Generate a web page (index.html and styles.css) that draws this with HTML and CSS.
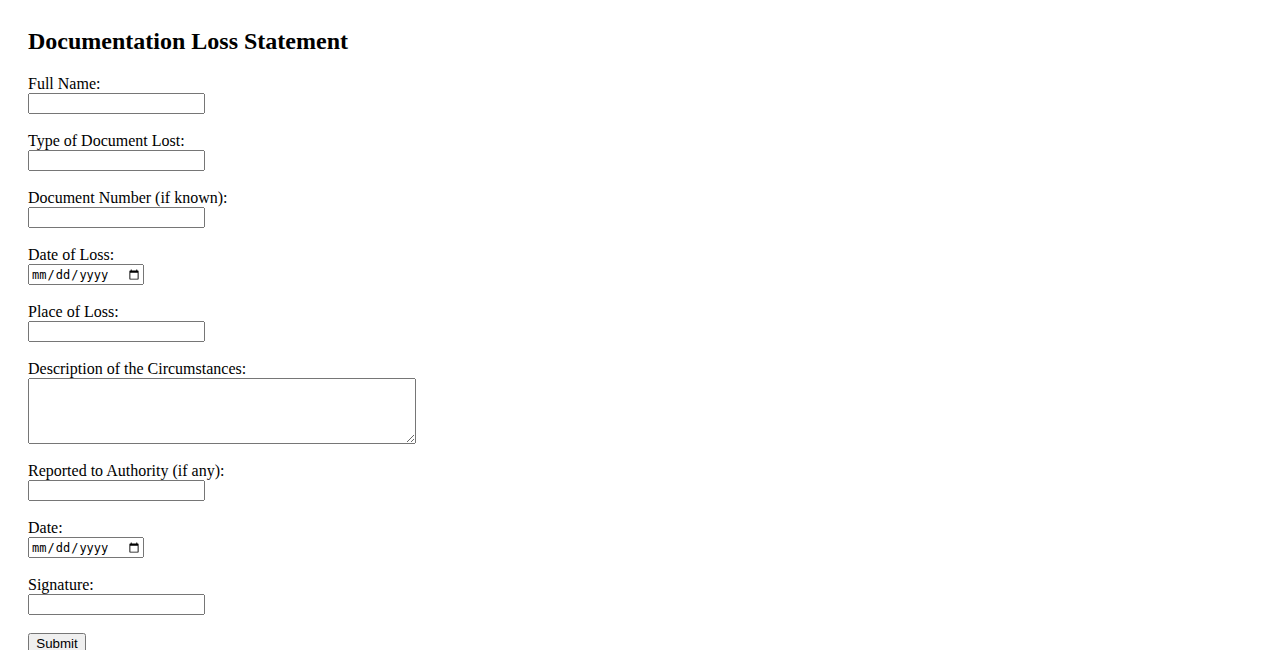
FILE: index.html
```html
<!DOCTYPE html>
<html lang="en">
<head>
    <meta charset="UTF-8">
    <meta name="viewport" content="width=device-width, initial-scale=1.0">
    <title>Documentation Loss Statement</title>
    <link rel="stylesheet" href="styles.css">
</head>
<body>
    <h2>Documentation Loss Statement</h2>
    <form id="loss-form">
        <div class="form-element">
            <label for="fullName">Full Name:</label>
            <input id="fullName" type="text" name="fullName">
        </div>
        <div class="form-element">
            <label for="docType">Type of Document Lost:</label>
            <input id="docType" type="text" name="docType">
        </div>
        <div class="form-element">
            <label for="docNumber">Document Number (if known):</label>
            <input id="docNumber" type="text" name="docNumber">
        </div>
        <div class="form-element">
            <label for="lossDate">Date of Loss:</label>
            <input id="lossDate" type="date" name="lossDate">
        </div>
        <div class="form-element">
            <label for="lossPlace">Place of Loss:</label>
            <input id="lossPlace" type="text" name="lossPlace">
        </div>
        <div class="form-element">
            <label for="description">Description of the Circumstances:</label>
            <textarea id="description" name="description"></textarea>
        </div>
        <div class="form-element">
            <label for="authority">Reported to Authority (if any):</label>
            <input id="authority" type="text" name="authority">
        </div>
        <div class="form-element">
            <label for="date">Date:</label>
            <input id="date" type="date" name="date">
        </div>
        <div class="form-element">
            <label for="signature">Signature:</label>
            <input id="signature" type="text" name="signature">
        </div>
        <input class="submit-button" type="submit" value="Submit">
    </form>
</body>
</html>
```

FILE: styles.css
```css
body {
    margin: 8px;
    padding: 20px;
    font-family: "Liberation Serif", "Times New Roman", serif;
    font-size: 16px;
}

h2 {
    margin-top: 0;
    margin-bottom: 20px;
    font-size: 24px;
}

label {
    display: block;
}

.form-element {
    margin-bottom: 18px;
}

.form-element input,
.form-element textarea {
    display: block;
    box-sizing: border-box;
}

input[type="text"] {
    width: 177px;
    height: 21px;
}

input[type="date"] {
    width: 116px;
    height: 21px;
    font-size: 12px;
}

textarea {
    width: 388px;
    height: 66px;
}

.submit-button {
    width: 58px;
}
```
